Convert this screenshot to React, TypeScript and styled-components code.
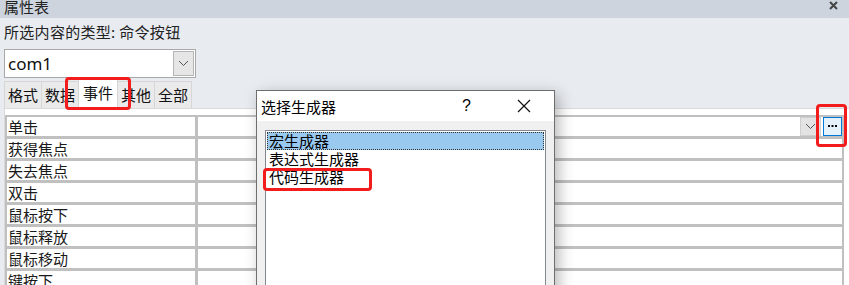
import styled, { createGlobalStyle } from "styled-components";

const GlobalStyle = createGlobalStyle`
    html, body {
        margin: 0;
        padding: 0;
        background: #e8ebf0;
        overflow: hidden;
    }
    body {
        font-family: "Noto Sans CJK SC", "Noto Sans", sans-serif;
        color: #1a1a1a;
    }
`;

const EVENTS = ["单击", "获得焦点", "失去焦点", "双击", "鼠标按下", "鼠标释放", "鼠标移动", "键按下"];
const TABS = ["格式", "数据", "事件", "其他", "全部"];
const BUILDERS = ["宏生成器", "表达式生成器", "代码生成器"];

const Chevron = () => (
    <svg width="11" height="7" viewBox="0 0 11 7">
        <path d="M1 1 L5.5 5.5 L10 1" fill="none" stroke="#555" strokeWidth="1" />
    </svg>
);

const App = () => {
    return (
        <Window>
            <GlobalStyle />
            <TitleBar>
                <span className="title">属性表</span>
                <svg width="9" height="9" viewBox="0 0 9 9" className="close">
                    <path d="M1 1 L8 8 M8 1 L1 8" stroke="#444" strokeWidth="2" />
                </svg>
            </TitleBar>
            <TypeLabel>所选内容的类型: 命令按钮</TypeLabel>
            <Combo>
                <span>com1</span>
                <ComboButton>
                    <Chevron />
                </ComboButton>
            </Combo>
            <Tabs>
                {TABS.map((t) => (
                    <Tab key={t} $active={t === "事件"}>
                        {t}
                    </Tab>
                ))}
            </Tabs>
            <Panel>
                <Grid>
                    {EVENTS.map((name, i) => (
                        <Row key={name}>
                            <LabelCell>{name}</LabelCell>
                            <ValueCell>
                                {i === 0 && (
                                    <>
                                        <ArrowBox>
                                            <Chevron />
                                        </ArrowBox>
                                        <BuildButton>
                                            <svg width="9" height="3" viewBox="0 0 9 3">
                                                <rect x="0" y="0" width="2" height="2" fill="#000" />
                                                <rect x="3.5" y="0" width="2" height="2" fill="#000" />
                                                <rect x="7" y="0" width="2" height="2" fill="#000" />
                                            </svg>
                                        </BuildButton>
                                    </>
                                )}
                            </ValueCell>
                        </Row>
                    ))}
                </Grid>
            </Panel>

            <Dialog>
                <DialogTitle>
                    <span>选择生成器</span>
                    <span className="help">?</span>
                    <svg width="14" height="14" viewBox="0 0 14 14" className="x">
                        <path d="M1 1 L13 13 M13 1 L1 13" stroke="#111" strokeWidth="1.2" />
                    </svg>
                </DialogTitle>
                <DialogBody>
                    <ListBox>
                        {BUILDERS.map((b, i) => (
                            <ListItem key={b} $selected={i === 0}>
                                {b}
                            </ListItem>
                        ))}
                    </ListBox>
                </DialogBody>
            </Dialog>

            <Mark style={{ left: 65, top: 77, width: 66, height: 33 }} />
            <Mark style={{ left: 263, top: 168, width: 109, height: 23 }} />
            <Mark style={{ left: 816, top: 104, width: 31, height: 43 }} />
        </Window>
    );
};

export default App;

const Window = styled.div`
    position: relative;
    width: 849px;
    height: 285px;
    overflow: hidden;
    background: #e8ebf0;
`;

const TitleBar = styled.div`
    height: 18px;
    background: #cdd4de;
    display: flex;
    align-items: flex-start;
    justify-content: space-between;
    padding: 0 11px 0 4px;
    overflow: hidden;
    .title {
        font-size: 15px;
        line-height: 15px;
        margin-top: -1px;
        color: #222;
    }
    .close {
        margin-top: 1px;
    }
`;

const TypeLabel = styled.div`
    margin: 4px 0 0 4px;
    font-size: 15px;
    line-height: 20px;
    color: #222;
    letter-spacing: 0.3px;
`;

const Combo = styled.div`
    margin: 7px 0 0 4px;
    width: 187px;
    height: 27px;
    background: #fff;
    border: 1px solid #a8a8a8;
    display: flex;
    align-items: center;
    justify-content: space-between;
    padding-left: 3px;
    span {
        font-size: 17px;
        line-height: 27px;
        color: #111;
        font-family: "Noto Sans", sans-serif;
    }
`;

const ComboButton = styled.div`
    width: 19px;
    height: 23px;
    margin-right: 1px;
    background: #e6e6e6;
    border: 1px solid #b5b5b5;
    display: flex;
    align-items: center;
    justify-content: center;
`;

const Tabs = styled.div`
    margin-top: 2px;
    height: 28px;
    display: flex;
    align-items: flex-end;
    padding-left: 4px;
`;

const Tab = styled.div<{ $active?: boolean }>`
    height: ${(p) => (p.$active ? 28 : 26)}px;
    padding: 0 ${(p) => (p.$active ? 4 : 3)}px;
    background: ${(p) => (p.$active ? "#fff" : "#eaeaea")};
    border: 1px solid #d6d6d6;
    border-bottom: none;
    margin-right: -1px;
    font-size: 15px;
    line-height: 26px;
    color: #111;
`;

const Panel = styled.div`
    margin-left: 4px;
    width: 840px;
    height: 200px;
    background: #fff;
    border-top: 1px solid #d9d9d9;
    border-left: 1px solid #d9d9d9;
    padding: 6px 5px 0 0;
`;

const Grid = styled.div`
    width: 835px;
    background: #c0c0c0;
    padding: 2px 2px 0 2px;
    display: flex;
    flex-direction: column;
    gap: 3px;
`;

const Row = styled.div`
    display: grid;
    grid-template-columns: 188px 1fr;
    gap: 3px;
    height: 19px;
`;

const LabelCell = styled.div`
    background: #fff;
    padding-left: 1px;
    font-size: 15px;
    line-height: 19px;
    color: #1a1a1a;
    overflow: hidden;
    white-space: nowrap;
`;

const ValueCell = styled.div`
    background: #fff;
    display: flex;
    justify-content: flex-end;
    align-items: stretch;
`;

const ArrowBox = styled.div`
    width: 19px;
    background: #e3e3e3;
    border: 1px solid #cfcfcf;
    display: flex;
    align-items: center;
    justify-content: center;
    margin-right: 2px;
`;

const BuildButton = styled.div`
    width: 17px;
    background: #e5f1fb;
    border: 1px solid #0078d7;
    display: flex;
    align-items: center;
    justify-content: center;
`;

const Dialog = styled.div`
    position: absolute;
    left: 256px;
    top: 90px;
    width: 297px;
    height: 230px;
    background: #f0f0f0;
    border: 1px solid #6e6e6e;
    box-shadow: 4px 4px 14px rgba(0, 0, 0, 0.28);
`;

const DialogTitle = styled.div`
    height: 30px;
    background: #fff;
    display: flex;
    align-items: center;
    padding-left: 4px;
    font-size: 15px;
    color: #000;
    .help {
        margin-left: 126px;
        font-family: "Liberation Sans", sans-serif;
        font-size: 16px;
    }
    .x {
        margin-left: 46px;
    }
`;

const DialogBody = styled.div`
    padding: 9px 8px 0 8px;
`;

const ListBox = styled.div`
    height: 200px;
    background: #fff;
    border: 1px solid #828790;
    padding: 1px;
`;

const ListItem = styled.div<{ $selected?: boolean }>`
    height: 18px;
    line-height: 18px;
    font-size: 15px;
    padding-left: 2px;
    color: #000;
    background: ${(p) => (p.$selected ? "#99c9ef" : "transparent")};
    outline: ${(p) => (p.$selected ? "1px dotted #333" : "none")};
    outline-offset: -1px;
`;

const Mark = styled.div`
    position: absolute;
    box-sizing: border-box;
    border: 3px solid #f21c1c;
    border-radius: 4px;
    pointer-events: none;
`;
